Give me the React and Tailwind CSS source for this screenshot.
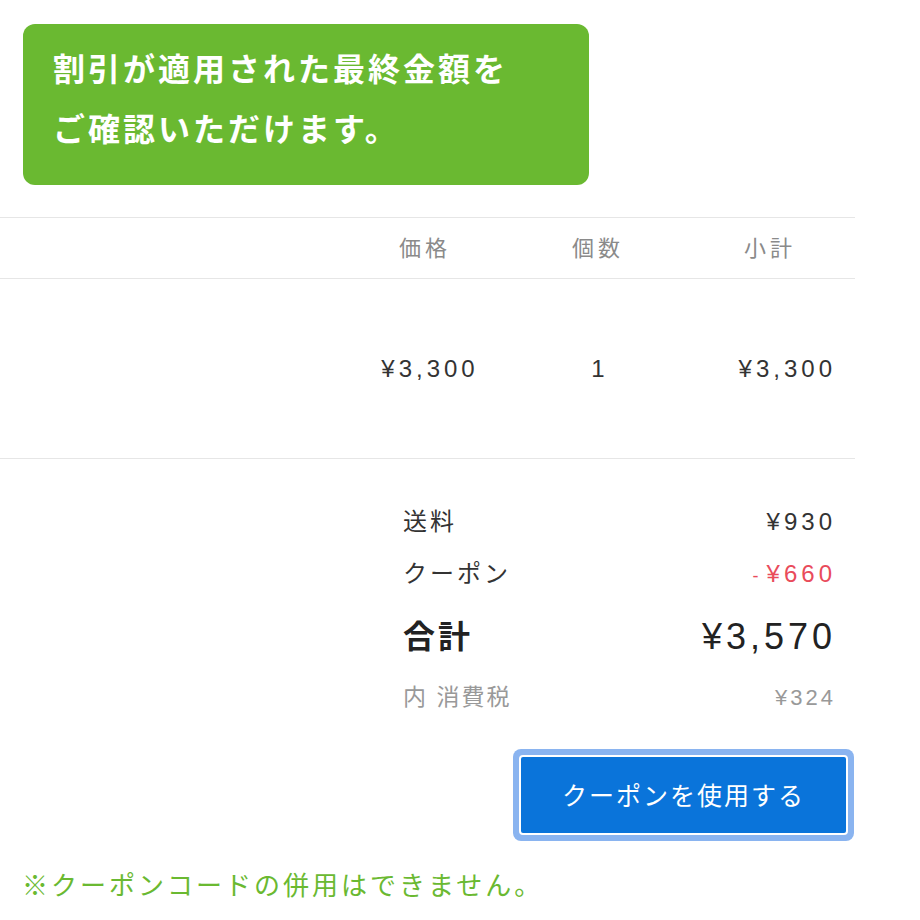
import React from 'react';

const font = { fontFamily: '"Liberation Sans", "Noto Sans CJK JP", sans-serif' };

const App = () => {
    return (
        <div className="w-[920px] h-[920px] bg-white relative overflow-hidden" style={font}>
            {/* Callout */}
            <div className="pt-[24px] pl-[23px]">
                <div className="w-[566px] h-[161px] bg-[#6ab931] rounded-[12px] pl-[30px] pt-[16px] text-white font-bold text-[32px] leading-[60px] tracking-[3px]">
                    <p>割引が適用された最終金額を</p>
                    <p>ご確認いただけます。</p>
                </div>
            </div>

            {/* Table */}
            <div className="mt-[32px] w-[855px]">
                <div className="flex h-[62px] items-center border-t border-b border-[#e6e6e6] text-[22px] text-[#8a8a8a] tracking-[4px]">
                    <div className="flex-1"></div>
                    <div className="w-[172px] text-center">価格</div>
                    <div className="w-[174px] text-center">個数</div>
                    <div className="w-[170px] text-center">小計</div>
                </div>
                <div className="flex h-[180px] items-center border-b border-[#e6e6e6] text-[24px] text-[#333] tracking-[4px] pt-[1px]">
                    <div className="flex-1"></div>
                    <div className="w-[172px] text-center pl-[10px]">¥3,300</div>
                    <div className="w-[174px] text-center pl-[4px]">1</div>
                    <div className="w-[170px] text-right pr-[19px]">¥3,300</div>
                </div>
            </div>

            {/* Summary */}
            <div className="ml-[403px] w-[433px] pt-[47px]">
                <div className="flex justify-between items-center h-[32px] text-[#333]">
                    <span className="text-[24px] tracking-[3px]">送料</span>
                    <span className="text-[24px] tracking-[4px]">¥930</span>
                </div>
                <div className="flex justify-between items-center h-[32px] mt-[20px]">
                    <span className="text-[#333] text-[24px] tracking-[3px]">クーポン</span>
                    <span className="text-[#e94b5b] text-[24px] tracking-[4px]"><span className="text-[18px] mr-[4px]">-</span>¥660</span>
                </div>
                <div className="flex justify-between items-center h-[44px] mt-[25px] text-[#222]">
                    <span className="text-[32px] font-bold tracking-[3px]">合計</span>
                    <span className="text-[36px] tracking-[4px]">¥3,570</span>
                </div>
                <div className="flex justify-between items-center h-[32px] mt-[22px] text-[#999]">
                    <span className="text-[23px] tracking-[2px]">内 消費税</span>
                    <span className="text-[22px] tracking-[3px]">¥324</span>
                </div>
            </div>

            {/* Button */}
            <div className="flex justify-end w-[854px] mt-[36px]">
                <button className="w-[341px] h-[92px] rounded-[8px] bg-[#8ab4f0] p-[6px]">
                    <div className="w-full h-full bg-[#0a74da] rounded-[4px] border-[2px] border-white flex items-center justify-center text-white text-[25px] tracking-[2px] pt-[4px]">
                        クーポンを使用する
                    </div>
                </button>
            </div>

            <p className="mt-[26px] pl-[22px] text-[26px] text-[#6ab931] tracking-[3px]">
                ※クーポンコードの併用はできません。
            </p>
        </div>
    );
};

export default App;
